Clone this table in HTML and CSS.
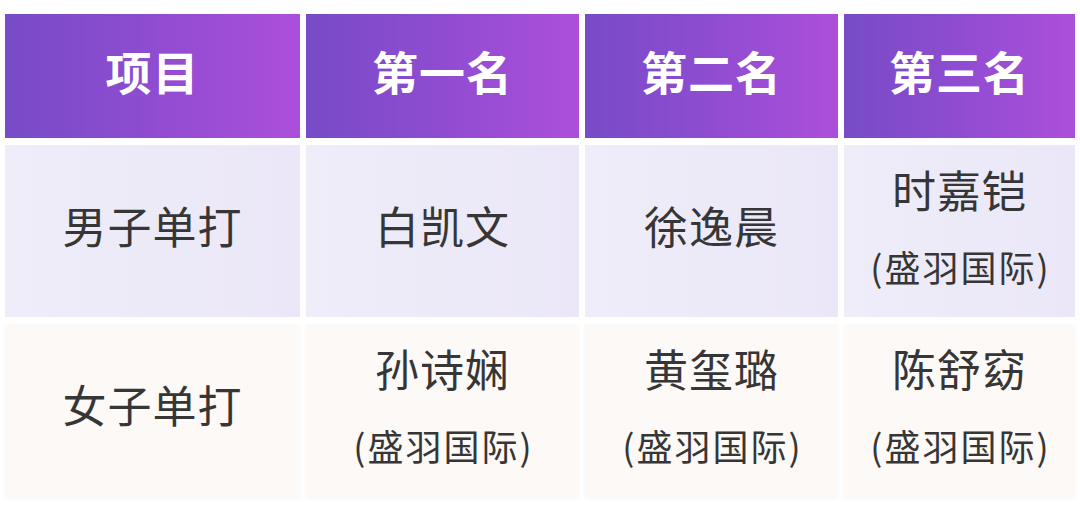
FILE: index.html
```html
<!DOCTYPE html>
<html lang="zh-CN">
<head>
<meta charset="utf-8">
<link rel="stylesheet" href="styles.css">
</head>
<body>
<div class="table">
  <div class="cell head">项目</div>
  <div class="cell head">第一名</div>
  <div class="cell head">第二名</div>
  <div class="cell head">第三名</div>

  <div class="cell row1"><span class="name">男子单打</span></div>
  <div class="cell row1"><span class="name">白凯文</span></div>
  <div class="cell row1"><span class="name">徐逸晨</span></div>
  <div class="cell row1 two"><span class="name">时嘉铠</span><span class="aff">(盛羽国际)</span></div>

  <div class="cell row2"><span class="name">女子单打</span></div>
  <div class="cell row2 two"><span class="name">孙诗娴</span><span class="aff">(盛羽国际)</span></div>
  <div class="cell row2 two"><span class="name">黄玺璐</span><span class="aff">(盛羽国际)</span></div>
  <div class="cell row2 two"><span class="name">陈舒窈</span><span class="aff">(盛羽国际)</span></div>
</div>
</body>
</html>
```
FILE: styles.css
```css
html, body {
  margin: 0;
  padding: 0;
  background: #ffffff;
}
body {
  width: 1080px;
  height: 526px;
  font-family: "Noto Sans CJK SC", "Noto Sans", sans-serif;
  color: #363636;
}
.table {
  display: grid;
  grid-template-columns: 295px 273px 253px 231px;
  grid-template-rows: 124px 172px 173px;
  column-gap: 6px;
  row-gap: 7px;
  padding: 14px 0 0 5px;
}
.cell {
  display: flex;
  flex-direction: column;
  align-items: center;
  justify-content: center;
  padding-bottom: 13px;
  box-sizing: border-box;
}
.head {
  background: linear-gradient(90deg, #774bc7 0%, #8d4cd0 45%, #ac4fdb 100%);
  color: #ffffff;
  font-weight: 700;
  font-size: 46px;
  letter-spacing: 1px;
  padding-bottom: 12px;
}
.row1 {
  background: linear-gradient(90deg, #efedf8 0%, #ebe7f8 100%);
}
.row2 {
  background: #fcf9f6;
  box-shadow: 0 2px 3px rgba(200, 195, 210, 0.15);
}
.name {
  font-size: 44px;
  line-height: 60px;
  letter-spacing: 1px;
}
.aff {
  font-size: 36px;
  line-height: 50px;
  letter-spacing: 2px;
  margin-right: -2px;
}
.two {
  gap: 22px;
}
```
